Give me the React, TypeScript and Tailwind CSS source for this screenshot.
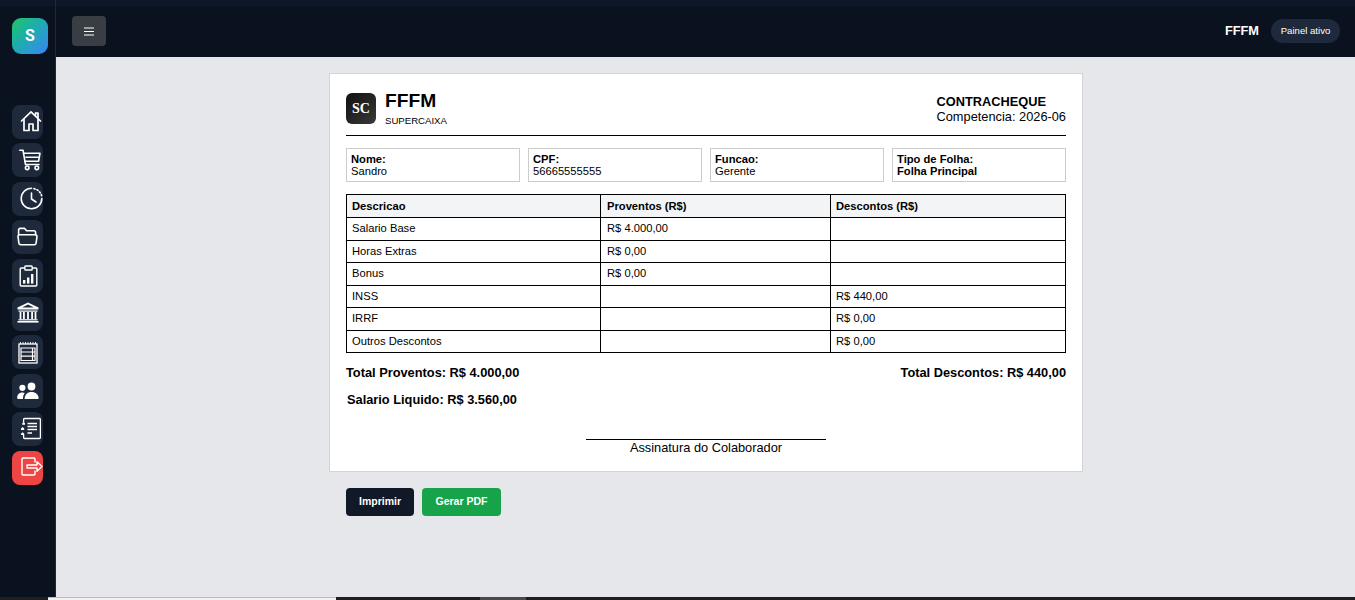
import React from "react";

const S = { fill: "none", stroke: "currentColor", strokeWidth: 1.6, strokeLinecap: "round" as const, strokeLinejoin: "round" as const };

const icons: React.ReactNode[] = [
  <svg key="home" width="22" height="22" viewBox="0 0 22 22" {...S} strokeWidth={1.7}>
    <path d="M1.5 11 11 1.8l9.5 9.2" /><path d="M15.5 5.5V3h2.5v5" /><path d="M4 9.5V20.5h5v-6.5h4v6.5h5V9.5" />
  </svg>,
  <svg key="cart" width="22" height="22" viewBox="0 0 22 22" {...S} strokeWidth={1.6}>
    <path d="M0.8 1.2h3.2L6.5 15.5H20" /><path d="M4.6 4.2H21l-1.4 8H6" /><path d="M7 8.2h13.2" />
    <circle cx="8.2" cy="18.8" r="1.8" /><circle cx="17.8" cy="18.8" r="1.8" />
  </svg>,
  <svg key="clock" width="23" height="23" viewBox="0 0 23 23" {...S}>
    <path d="M11.5 1.2a10.3 10.3 0 1 0 10.3 10.3" /><path d="M14 1.6a10.3 10.3 0 0 1 7.7 7.4" strokeDasharray="1.2 2" />
    <path d="M11.5 6v6l4.5 3" />
  </svg>,
  <svg key="folder" width="21" height="19" viewBox="0 0 21 19" {...S}>
    <path d="M1.6 8V3a1.6 1.6 0 0 1 1.6-1.6h4.4l2 2.4h7.4A1.6 1.6 0 0 1 18.6 5.4V8" />
    <path d="M1 9.4A1.6 1.6 0 0 1 2.6 7.8h15.8A1.6 1.6 0 0 1 20 9.4l-.9 6.8a1.8 1.8 0 0 1-1.8 1.5H3.7a1.8 1.8 0 0 1-1.8-1.5z" />
  </svg>,
  <svg key="report" width="19" height="22" viewBox="0 0 19 22" {...S} strokeWidth={1.4}>
    <path d="M5.5 3H2.2a1 1 0 0 0-1 1v16a1 1 0 0 0 1 1h14.6a1 1 0 0 0 1-1V4a1 1 0 0 0-1-1h-3.3" />
    <rect x="5.8" y="1" width="7.4" height="4" rx="0.8" />
    <rect x="4" y="15" width="2.4" height="3.6" fill="currentColor" stroke="none" />
    <rect x="8" y="12.5" width="2.4" height="6.1" fill="currentColor" stroke="none" />
    <rect x="12" y="9" width="2.4" height="9.6" fill="currentColor" stroke="none" />
  </svg>,
  <svg key="bank" width="22" height="21" viewBox="0 0 22 21" fill="currentColor">
    <path d="M11 0.5 21.5 5.5V7.5H0.5V5.5zM11 2.4 5.2 5.4h11.6z" fillRule="evenodd" />
    <rect x="1.5" y="8.5" width="19" height="1.2" />
    <rect x="2.6" y="10" width="1.8" height="7" /><rect x="6" y="10" width="1.8" height="7" /><rect x="10.1" y="10" width="1.8" height="7" /><rect x="14.2" y="10" width="1.8" height="7" /><rect x="17.6" y="10" width="1.8" height="7" />
    <rect x="1.5" y="17.2" width="19" height="1.2" /><rect x="0.5" y="19" width="21" height="1.6" />
  </svg>,
  <svg key="ledger" width="20" height="23" viewBox="0 0 20 23" fill="none" stroke="currentColor" strokeWidth="1.3">
    <rect x="1" y="3" width="18" height="19" />
    <path d="M2.5 1v2M5 1v2M7.5 1v2M10 1v2M12.5 1v2M15 1v2M17.5 1v2" strokeWidth="0.9" />
    <path d="M3 7h14v12.5H3zM3 11h14M3 15.2h14M14.5 7v12.5" strokeWidth="1.2" />
  </svg>,
  <svg key="users" width="22" height="18" viewBox="0 0 22 17" fill="currentColor">
    <circle cx="14.5" cy="4" r="3.9" /><circle cx="5.4" cy="5.3" r="3.1" />
    <path d="M7.6 16.6c0-4.5 2.8-7.2 6.9-7.2s7.1 2.7 7.1 6c0 .8-.5 1.2-1.2 1.2z" />
    <path d="M0.2 15.2c0-3.1 2-5.2 5.1-5.2 1 0 1.8.2 2.5.6-1.2 1.4-1.8 3.4-1.9 6H1.4c-.8 0-1.2-.6-1.2-1.4z" />
  </svg>,
  <svg key="notes" width="21" height="23" viewBox="0 0 21 22" fill="none" stroke="currentColor" strokeWidth="1.3">
    <path d="M4.5 1h15a.9.9 0 0 1 .9.9v18.2a.9.9 0 0 1-.9.9h-15a.9.9 0 0 1-.9-.9V17M3.6 5V1.9A.9.9 0 0 1 4.5 1" />
    <path d="M7.5 6h9.5M7.5 9h9.5M7.5 12h9.5M7.5 15.5h4.5" strokeWidth="1.5" />
    <path d="M2.2 5.8 3.6 4.4 5 5.8v1.4H2.2zM1 11l1.6-1.4L4.2 11v1.4H1zM1 16.2l1.6-1.4 1.6 1.4v1.4H1z" fill="currentColor" stroke="none" />
  </svg>,
  <svg key="logout" width="22" height="19" viewBox="0 0 22 19" fill="none" stroke="currentColor" strokeWidth="1.4" strokeLinejoin="round">
    <path d="M14 5.5V2a1 1 0 0 0-1-1H2a1 1 0 0 0-1 1v15a1 1 0 0 0 1 1h11a1 1 0 0 0 1-1v-3.5" />
    <path d="M6 8h10V4.7l5 4.8-5 4.8V11H6z" fill="#ef4444" />
  </svg>,
];

const offsets = ["pl-[8px] pb-[3px]", "pl-[7px] pb-[1px]", "pl-[8px] pb-[1px]", "pl-[5px] pb-[2px]", "pl-[7px]", "pl-[5px] pb-[3px]", "pl-[6px]", "pl-[5px]", "pl-[8px] pb-[1px]", "pl-[9px] pb-[3px]"];

const info = [
  ["Nome:", "Sandro", false],
  ["CPF:", "56665555555", false],
  ["Funcao:", "Gerente", false],
  ["Tipo de Folha:", "Folha Principal", true],
] as const;

const rows = [
  ["Salario Base", "R$ 4.000,00", ""],
  ["Horas Extras", "R$ 0,00", ""],
  ["Bonus", "R$ 0,00", ""],
  ["INSS", "", "R$ 440,00"],
  ["IRRF", "", "R$ 0,00"],
  ["Outros Descontos", "", "R$ 0,00"],
];

export default function App() {
  return (
    <div className="flex h-[600px] w-[1355px] flex-col overflow-hidden bg-[#e5e7eb] font-['Liberation_Sans',Arial,sans-serif] text-black">
      <div className="flex min-h-0 flex-1">
        <aside className="flex w-[56px] shrink-0 flex-col border-r border-[#1e293b] bg-[#0a1220] pl-[12px] text-white">
          <div className="h-[6px] -ml-[12px] w-[55px] bg-[#0d1729]" />
          <div className="mt-[12px] flex h-[36px] w-[36px] items-center justify-center rounded-[9px] bg-gradient-to-br from-[#22c55e] to-[#3b82f6] font-['Roboto',sans-serif] text-[16px] font-bold text-white">
            S
          </div>
          <nav className="mt-[51px] flex flex-col gap-[4.4px]">
            {icons.map((icon, i) => (
              <div
                key={i}
                className={`flex h-[34px] w-[31px] items-center rounded-[8px] ${i === 9 ? "bg-[#ef4444]" : "bg-[#1e293b]"} ${offsets[i]}`}
              >
                <span className="shrink-0">{icon}</span>
              </div>
            ))}
          </nav>
        </aside>
        <div className="flex min-w-0 flex-1 flex-col">
          <header className="flex h-[57px] shrink-0 flex-col bg-[#0a1220]">
            <div className="h-[6px] bg-[#0d1729]" />
            <div className="flex flex-1 items-start justify-between pl-[16px] pr-[15px] pt-[10px]">
              <button className="flex h-[30px] w-[34px] items-center justify-center rounded-[4px] bg-[#393d44] text-white">
                <svg width="10" height="9" viewBox="0 0 10 9" stroke="currentColor" strokeWidth="1.1" fill="none"><path d="M0 1h10M0 4.5h10M0 8h10" /></svg>
              </button>
              <div className="flex items-center gap-[12px] pt-[3px]">
                <span className="text-[12.8px] font-bold text-white">FFFM</span>
                <span className="flex h-[24px] w-[69px] items-center justify-center rounded-full bg-[#1e293b] text-[9.6px] text-white">Painel ativo</span>
              </div>
            </div>
          </header>
          <main className="flex-1 pl-[273px] pt-[16px]">
            <div className="h-[399px] w-[754px] border border-[#d1d5db] bg-white px-[16px] pt-[19px]">
              <div className="flex h-[43px] justify-between border-b border-black">
                <div className="flex items-start gap-[9px]">
                  <div className="flex h-[31px] w-[30px] items-center justify-center rounded-[6px] bg-gradient-to-br from-[#111111] to-[#3a3a3a] font-['Liberation_Serif',serif] text-[14px] font-bold text-white">
                    SC
                  </div>
                  <div className="-mt-[4px]">
                    <div className="text-[19.2px] font-bold leading-[23px]">FFFM</div>
                    <div className="mt-[3px] text-[9.6px] leading-[11px]">SUPERCAIXA</div>
                  </div>
                </div>
                <div className="pt-[1px] text-[12.8px] leading-[15px]">
                  <div className="font-bold">CONTRACHEQUE</div>
                  <div>Competencia: 2026-06</div>
                </div>
              </div>
              <div className="mt-[12px] grid grid-cols-4 gap-[8px]">
                {info.map(([label, value, bold]) => (
                  <div key={label} className="flex h-[34px] flex-col justify-center border border-[#cccccc] px-[4px] text-[11.2px] leading-[12px]">
                    <span className="font-bold">{label}</span>
                    <span className={bold ? "font-bold" : ""}>{value}</span>
                  </div>
                ))}
              </div>
              <table className="mt-[12px] w-[719px] table-fixed border-collapse text-left text-[11.2px]">
                <colgroup>
                  <col className="w-[254px]" />
                  <col className="w-[230px]" />
                  <col className="w-[235px]" />
                </colgroup>
                <thead>
                  <tr className="h-[23px] bg-[#f3f4f6]">
                    <th className="border border-black px-[5px] font-bold">Descricao</th>
                    <th className="border border-black pl-[6px] pr-[5px] font-bold">Proventos (R$)</th>
                    <th className="border border-black px-[5px] font-bold">Descontos (R$)</th>
                  </tr>
                </thead>
                <tbody>
                  {rows.map((r) => (
                    <tr key={r[0]} className="h-[22.5px]">
                      {r.map((c, i) => (
                        <td key={i} className={`border border-black pr-[5px] ${i === 1 ? "pl-[6px]" : "pl-[5px]"}`}>{c}</td>
                      ))}
                    </tr>
                  ))}
                </tbody>
              </table>
              <div className="mt-[12px] flex justify-between text-[12.8px] font-bold leading-[16px]">
                <span>Total Proventos: R$ 4.000,00</span>
                <span>Total Descontos: R$ 440,00</span>
              </div>
              <div className="mt-[11px] pl-[1px] text-[12.8px] font-bold leading-[16px]">Salario Liquido: R$ 3.560,00</div>
              <div className="ml-[240px] mt-[31px] w-[240px] border-t border-black text-center text-[12.8px] leading-[15px]">
                Assinatura do Colaborador
              </div>
            </div>
            <div className="ml-[17px] mt-[16px] flex gap-[8px]">
              <button className="h-[28px] w-[68px] rounded-[4px] bg-[#111827] text-[10.5px] font-bold text-white">Imprimir</button>
              <button className="h-[28px] w-[79px] rounded-[4px] bg-[#16a34a] text-[10.5px] font-bold text-white">Gerar PDF</button>
            </div>
          </main>
        </div>
      </div>
      <div className="flex h-[3px] shrink-0 bg-[#1f1f1f]">
        <div className="ml-[48px] w-[288px] border-t border-[#bdbdbd] bg-[#f1f1f1]" />
        <div className="ml-[144px] w-[46px] bg-[#4a4a4a]" />
      </div>
    </div>
  );
}
